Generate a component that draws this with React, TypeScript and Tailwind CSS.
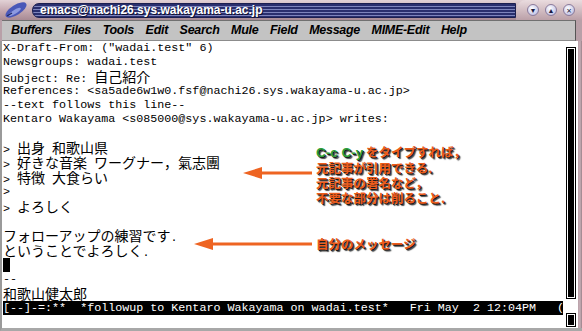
import React from "react";

const CURSOR = "\u0000cursor";

const lines = [
  'X-Draft-From: ("wadai.test" 6)',
  "Newsgroups: wadai.test",
  "Subject: Re: 自己紹介",
  "References: <sa5ade6w1w0.fsf@nachi26.sys.wakayama-u.ac.jp>",
  "--text follows this line--",
  "Kentaro Wakayama <s085000@sys.wakayama-u.ac.jp> writes:",
  "",
  "> 出身 和歌山県",
  "> 好きな音楽 ワーグナー，氣志團",
  "> 特徴 大食らい",
  ">",
  "> よろしく",
  "",
  "フォローアップの練習です.",
  "ということでよろしく.",
  CURSOR,
  "--",
  "和歌山健太郎",
];

const menus = ["Buffers", "Files", "Tools", "Edit", "Search", "Mule", "Field", "Message", "MIME-Edit", "Help"];

const isWide = (s: string) => /[^\x00-\x7f]/.test(s);

// ascii stays in the 7px mono, wide chars get a 14px cell like the X bitmap font.
// leading on the ascii runs is picked so both baselines meet (mono 11.7 vs noto cjk 14)
function Runs({ text }: { text: string }) {
  const parts = text.match(/[\x00-\x7f]+|[^\x00-\x7f]+/g) ?? [];
  return (
    <>
      {parts.map((p, i) =>
        /^[\x00-\x7f]/.test(p) ? (
          <span key={i} className="inline-block h-[15px] leading-[21px] align-top">
            {p}
          </span>
        ) : (
          <span key={i} className="inline-block h-[15px] leading-[15px] align-top text-[14px] font-['Noto_Sans_CJK_JP',sans-serif]">
            {p}
          </span>
        )
      )}
    </>
  );
}

function TitleButton({ children }: { children: React.ReactNode }) {
  return (
    <div className="w-[12px] h-[12px] rounded-full border border-[#8a7a9a] bg-[radial-gradient(circle_at_40%_35%,#ffffff,#c8c8e8_70%,#9a98c0)] flex items-center justify-center text-[#1a1a40] text-[7px] leading-none">
      {children}
    </div>
  );
}

function Arrow({ w }: { w: number }) {
  return (
    <svg width={w} height="14" viewBox={`0 0 ${w} 14`} className="block">
      <polygon points="0,7 19,1 19,13" fill="#ee6422" />
      <rect x="17" y="5.5" width={w - 17} height="3" fill="#ee6422" />
    </svg>
  );
}

const shadow = "[text-shadow:1px_1px_0_#1a1a1a,2px_2px_1px_#444]";

export default function App() {
  return (
    <div className="w-[582px] h-[331px] overflow-hidden relative bg-white flex flex-col">
      {/* title bar */}
      <div className="h-[20px] flex items-center bg-gradient-to-b from-[#e2d2d6] via-[#c6aab2] to-[#a88a94]">
        <div className="w-[32px] h-full flex items-center justify-center">
          <svg width="26" height="18" viewBox="0 0 26 18">
            <ellipse cx="13" cy="9" rx="12" ry="5" transform="rotate(-32 13 9)" fill="#4a58b8" />
            <ellipse cx="11" cy="10" rx="7" ry="2" transform="rotate(-32 13 9)" fill="#8e9ae0" />
            <path d="M4 15 L9 12" stroke="#202860" strokeWidth="1.2" />
          </svg>
        </div>
        <div className="flex-1 h-[15px] rounded-l-[7px] border border-[#1c1f50] bg-[repeating-linear-gradient(to_bottom,#2a2f6e_0px,#2a2f6e_2px,#7e84bc_2px,#7e84bc_3px)] flex items-center pl-[7px]">
          <span className="text-white font-bold text-[12px] font-['Liberation_Sans',sans-serif] leading-none [text-shadow:1px_1px_0_#101030]">
            emacs@nachi26.sys.wakayama-u.ac.jp
          </span>
        </div>
        <div className="w-[66px] h-full rounded-tl-[10px] bg-gradient-to-b from-[#eadcdf] to-[#bba0a8] flex items-center justify-end gap-[6px] pr-[7px]">
          <TitleButton>▼</TitleButton>
          <TitleButton>▲</TitleButton>
          <TitleButton>
            <span className="text-[9px]">×</span>
          </TitleButton>
        </div>
      </div>

      {/* menu bar */}
      <div className="h-[21px] flex bg-[#b8a0a8]">
        <div className="flex-1 ml-[2px] mr-[6px] bg-[#c3c3c3] border-t border-[#707070] border-b border-b-[#8c8c8c] border-r border-r-[#555] flex items-center pl-[9px] gap-[11.6px] font-['Liberation_Sans',sans-serif] font-bold italic text-[12.5px] text-black">
          {menus.map((m) => (
            <span key={m} className="tracking-[-0.3px]">
              {m}
            </span>
          ))}
        </div>
      </div>

      {/* body */}
      <div className="flex-1 flex bg-white border-l-2 border-[#9a9a9a] border-b-[3px] border-b-[#a8a8a8]">
        <div className="flex-1 flex flex-col pl-[1px] font-['Liberation_Mono',monospace] text-[11.7px] text-black">
          {lines.map((l, i) =>
            isWide(l) ? (
              <div key={i} className="h-[15px] whitespace-pre">
                <Runs text={l} />
              </div>
            ) : (
              <div key={i} className="h-[14px] leading-[14px] whitespace-pre">
                {l === CURSOR ? <div className="w-[7px] h-[14px] bg-black" /> : l}
              </div>
            )
          )}
          <div className="h-[14px] leading-[14px] w-[560px] bg-black text-white whitespace-pre overflow-hidden">
            {"[--]-=:**  *followup to Kentaro Wakayama on wadai.test*   Fri May  2 12:04PM   ("}
          </div>
        </div>
        <div className="w-[12px] flex flex-col items-center pt-[6px] pb-[1px]">
          <div className="w-[10px] h-[252px] border border-black bg-black shadow-[inset_0_0_0_1px_#fff]" />
          <div className="flex-1" />
          <div className="w-[10px] h-[14px] border border-black bg-black shadow-[inset_0_0_0_1px_#fff]" />
        </div>
        <div className="w-[5px] bg-[linear-gradient(to_right,#ffffff_0px,#ffffff_1px,#b8a0a8_1px,#c8b0b8_3px,#9a8088_5px)]" />
      </div>

      {/* annotations on top of the screenshot */}
      <div className="absolute left-[243px] top-[166px]">
        <Arrow w={69} />
      </div>
      <div className="absolute left-[194px] top-[237px]">
        <Arrow w={118} />
      </div>
      <div
        className={`absolute left-[316px] top-[144px] font-['Noto_Sans_CJK_JP',sans-serif] font-bold text-[12.5px] leading-[15px] text-[#ec5c1c] ${shadow}`}
      >
        <div>
          <span className="text-[#2ca03a] font-['Liberation_Sans',sans-serif] text-[13.5px]">C-c C-y</span> をタイプすれば，
        </div>
        <div>元記事が引用できる.</div>
        <div>元記事の署名など，</div>
        <div>不要な部分は削ること.</div>
      </div>
      <div
        className={`absolute left-[316px] top-[236px] font-['Noto_Sans_CJK_JP',sans-serif] font-bold text-[12.5px] leading-[15px] text-[#ec5c1c] ${shadow}`}
      >
        自分のメッセージ
      </div>
    </div>
  );
}
